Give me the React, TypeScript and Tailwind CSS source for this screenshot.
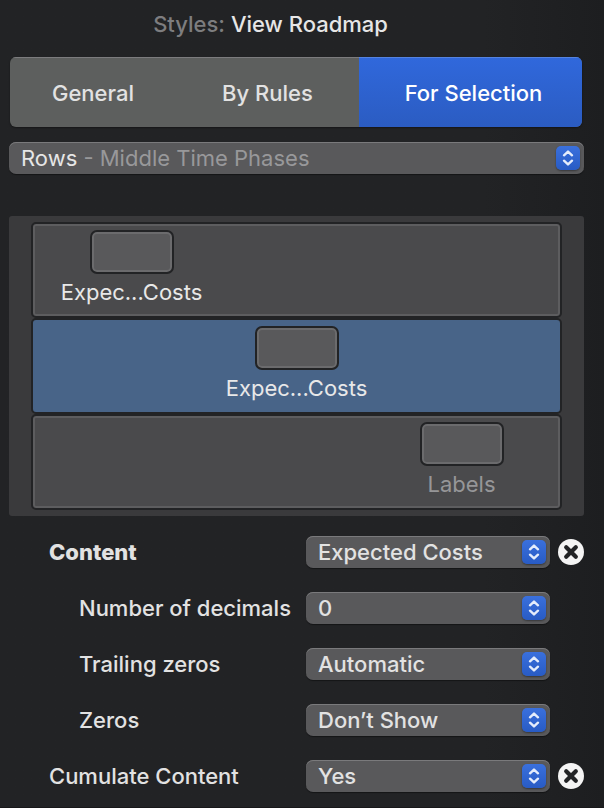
import { useId, useState } from "react";

function Stepper() {
  return (
    <span className="pointer-events-none absolute inset-y-0 right-1 flex items-center">
      <svg
        viewBox="0 0 24 24"
        className="size-6 rounded-[5px] bg-linear-to-b from-[#3a70dd] to-[#285bc4] shadow-[0_1px_2px_rgba(0,0,0,0.4)]"
        fill="none"
        stroke="#e4ecfb"
        strokeWidth="2.4"
        strokeLinecap="round"
        strokeLinejoin="round"
        aria-hidden="true"
      >
        <path d="M8 9.3 12 5.6l4 3.7" />
        <path d="M8 14.7l4 3.7 4-3.7" />
      </svg>
    </span>
  );
}

const popupClass =
  "block h-8 w-full appearance-none rounded-[7px] bg-[#59595b] pl-3 pr-9 text-[22px] leading-8 shadow-[inset_0_1px_0_#7a7a7c,0_1px_1px_rgba(0,0,0,0.4)] outline-none";

function Popup({ id, options }: { id: string; options: string[] }) {
  return (
    <div className="relative">
      <select id={id} className={`${popupClass} font-medium text-[#e2e2e2]`}>
        {options.map((option) => (
          <option key={option}>{option}</option>
        ))}
      </select>
      <Stepper />
    </div>
  );
}

function ScopePopup() {
  const scopes = ["Middle Time Phases", "Top Time Phases", "Bottom Time Phases"];
  const [scope, setScope] = useState(scopes[0]);
  return (
    <div className="relative">
      <select
        aria-label="Rows"
        value={scope}
        onChange={(event) => setScope(event.target.value)}
        className={`${popupClass} text-transparent`}
      >
        {scopes.map((name) => (
          <option key={name} className="text-white">
            {name}
          </option>
        ))}
      </select>
      <span
        aria-hidden="true"
        className="pointer-events-none absolute inset-y-0 left-3 leading-8 text-[#98989a]"
      >
        <span className="text-[#e6e6e6]">Rows</span> - {scope}
      </span>
      <Stepper />
    </div>
  );
}

const cells = [
  { label: "Expec...Costs", column: "col-start-1", tone: "text-[#e8e8e8]" },
  { label: "Expec...Costs", column: "col-start-2", tone: "text-[#e8e8e8]" },
  { label: "Labels", column: "col-start-3", tone: "text-[#969698]" },
];

function CellPicker() {
  const [selected, setSelected] = useState(1);
  return (
    <div className="mt-[42px] rounded-[3px] bg-[#3a3a3c] px-[22px] py-1.5">
      {cells.map((cell, index) => (
        <button
          key={index}
          type="button"
          aria-pressed={index === selected}
          onClick={() => setSelected(index)}
          className={`grid h-24 w-full grid-cols-3 items-start rounded-[5px] border-2 border-[#222325] px-4 pt-1.5 ${
            index === selected
              ? "bg-[#486488]"
              : "bg-[#4a4a4c] shadow-[inset_0_0_0_2px_#5d5d5f]"
          }`}
        >
          <span className={`flex flex-col items-center ${cell.column}`}>
            <span className="h-11 w-[84px] rounded-[7px] border-2 border-[#222325] bg-[#59595b] shadow-[inset_0_0_0_2px_#6b6b6d]" />
            <span className={`mt-1 leading-7 ${cell.tone}`}>{cell.label}</span>
          </span>
        </button>
      ))}
    </div>
  );
}

type SettingProps = {
  label: string;
  options: string[];
  nested?: boolean;
  strong?: boolean;
  removable?: boolean;
};

function Setting({ label, options, nested, strong, removable }: SettingProps) {
  const id = useId();
  return (
    <div className="grid grid-cols-[1fr_244px_26px] items-center gap-x-2">
      <label
        htmlFor={id}
        className={`whitespace-nowrap leading-8 ${nested ? "pl-[70px]" : "pl-10"} ${
          strong ? "font-extrabold" : "font-medium"
        }`}
      >
        {label}
      </label>
      <Popup id={id} options={options} />
      {removable && (
        <button type="button" aria-label={`Remove ${label}`} className="size-[26px]">
          <svg viewBox="0 0 26 26" className="size-full" aria-hidden="true">
            <circle cx="13" cy="13" r="13" fill="#f4f4f4" />
            <path
              d="M8.2 8.2l9.6 9.6M17.8 8.2l-9.6 9.6"
              stroke="#222325"
              strokeWidth="4.2"
              strokeLinecap="round"
            />
          </svg>
        </button>
      )}
    </div>
  );
}

const tabs = [
  { name: "General", padding: "" },
  { name: "By Rules", padding: "" },
  { name: "For Selection", padding: "pl-1.5" },
];

export default function App() {
  const [tab, setTab] = useState("For Selection");
  return (
    <main className="min-h-screen border-b border-[#18181a] bg-linear-to-r from-[#222325] from-80% to-[#1d1e20] pb-3.5 pl-[9px] pr-5 pt-2 font-['Inter','Liberation_Sans',sans-serif] text-[22px] text-[#e2e2e2]">
      <h1 className="pr-13 text-center font-medium leading-8 text-[#7d7d7f]">
        Styles: <span className="text-[#e6e6e6]">View Roadmap</span>
      </h1>

      <div
        role="tablist"
        className="ml-px mr-0.5 mt-[17px] grid h-[70px] grid-cols-[166fr_183fr_223fr] overflow-hidden rounded-md bg-[#5d5f5e] shadow-[0_1px_2px_rgba(0,0,0,0.4)]"
      >
        {tabs.map(({ name, padding }) => (
          <button
            key={name}
            type="button"
            role="tab"
            aria-selected={tab === name}
            onClick={() => setTab(name)}
            className={`whitespace-nowrap pt-0.5 font-medium ${padding} ${
              tab === name
                ? "bg-linear-to-b from-[#3068dc] to-[#2b5cc2] text-white shadow-[inset_0_1px_0_#5583e0]"
                : "text-[#e2e2e2] shadow-[inset_0_1px_0_#7c7c7e]"
            }`}
          >
            {name}
          </button>
        ))}
      </div>

      <div className="mt-[15px]">
        <ScopePopup />
      </div>

      <CellPicker />

      <form className="mt-5 flex flex-col gap-6">
        <Setting label="Content" options={["Expected Costs", "Actual Costs"]} strong removable />
        <Setting label="Number of decimals" options={["0", "1", "2"]} nested />
        <Setting label="Trailing zeros" options={["Automatic", "Show"]} nested />
        <Setting label="Zeros" options={["Don’t Show", "Show"]} nested />
        <Setting label="Cumulate Content" options={["Yes", "No"]} removable />
      </form>
    </main>
  );
}
